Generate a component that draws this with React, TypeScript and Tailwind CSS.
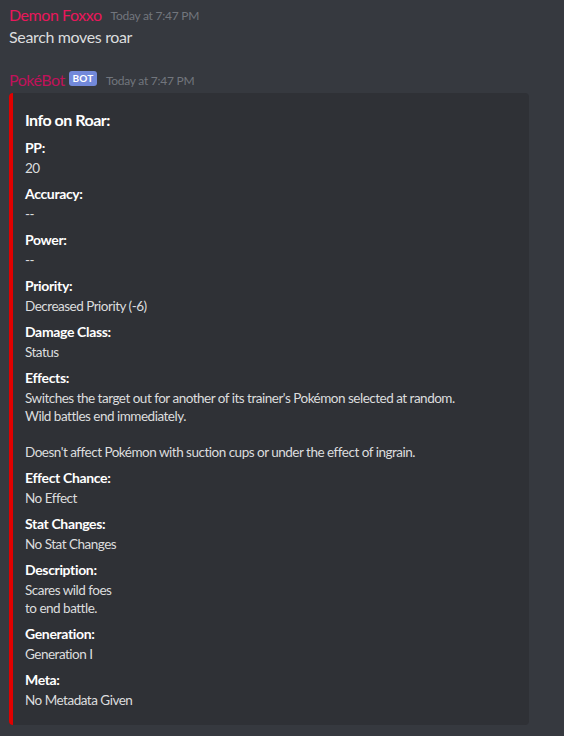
const fields: { name: string; value: string[] }[] = [
  { name: 'PP:', value: ['20'] },
  { name: 'Accuracy:', value: ['--'] },
  { name: 'Power:', value: ['--'] },
  { name: 'Priority:', value: ['Decreased Priority (-6)'] },
  { name: 'Damage Class:', value: ['Status'] },
  {
    name: 'Effects:',
    value: [
      "Switches the target out for another of its trainer's Pokémon selected at random.",
      'Wild battles end immediately.',
      '',
      "Doesn't affect Pokémon with suction cups or under the effect of ingrain.",
    ],
  },
  { name: 'Effect Chance:', value: ['No Effect'] },
  { name: 'Stat Changes:', value: ['No Stat Changes'] },
  { name: 'Description:', value: ['Scares wild foes', 'to end battle.'] },
  { name: 'Generation:', value: ['Generation I'] },
  { name: 'Meta:', value: ['No Metadata Given'] },
]

function Header({ name, color, bot }: { name: string; color: string; bot?: boolean }) {
  return (
    <div className="flex items-center h-[22px] leading-[22px]">
      <span className={`text-[16px] tracking-[-0.45px] ${color}`}>{name}</span>
      {bot && (
        <span className="ml-[4px] -mt-[3px] h-[15px] w-[28px] text-center rounded-[3px] bg-[#7289da] text-white text-[10px] font-bold leading-[15px] tracking-[0.2px]">
          BOT
        </span>
      )}
      <span className="ml-[9px] text-[12px] tracking-[-0.25px] text-[#72767d] mt-[2px]">Today at 7:47 PM</span>
    </div>
  )
}

export default function App() {
  return (
    <div
      className="min-h-[736px] w-[564px] bg-[#36393f] pt-[4px] px-[9px] text-[#dcddde]"
      style={{ fontFamily: 'Lato, "Noto Sans", sans-serif' }}
    >
      <div>
        <Header name="Demon Foxxo" color="text-[#e9175b]" />
        <div className="text-[16px] leading-[22px] tracking-[-0.35px] text-[#dcddde]">Search moves roar</div>
      </div>

      <div className="mt-[21px]">
        <Header name="PokéBot" color="text-[#c0125a]" bot />
        <div className="mt-[2px] w-[520px] flex rounded-[4px] overflow-hidden bg-[#2f3136]">
          <div className="w-[4px] shrink-0 bg-[#e00000]" />
          <div className="pt-[8px] pr-[16px] pb-[16px] pl-[12px]">
            <div className="mt-[8px] text-[16px] leading-[22px] font-bold tracking-[-0.5px] text-white">Info on Roar:</div>
            <div className="mt-[8px] flex flex-col gap-[8px]">
              {fields.map((f) => (
                <div key={f.name}>
                  <div className="text-[14px] leading-[18px] font-bold tracking-[-0.35px] text-white mb-[2px]">{f.name}</div>
                  <div className="text-[13.5px] leading-[18px] tracking-[-0.5px] text-[#dcddde]">
                    {f.value.map((line, i) => (
                      <div key={i} className="h-[18px] whitespace-nowrap">
                        {line}
                      </div>
                    ))}
                  </div>
                </div>
              ))}
            </div>
          </div>
        </div>
      </div>
    </div>
  )
}
